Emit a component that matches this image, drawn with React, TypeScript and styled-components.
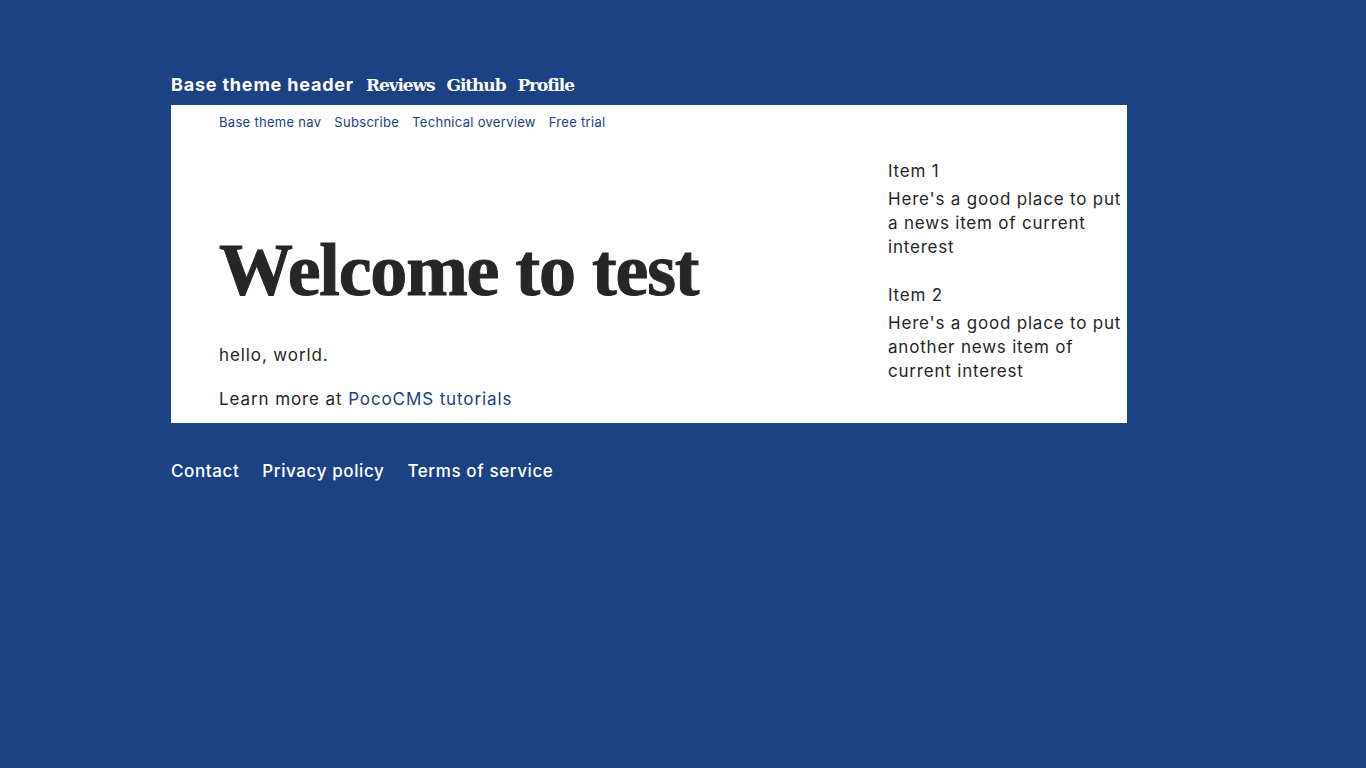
import React from 'react';
import styled, { createGlobalStyle } from 'styled-components';

// Base theme landing page

const GlobalStyle = createGlobalStyle`
  html, body {
    margin: 0;
    padding: 0;
    background: #1d4185;
  }
  body {
    font-family: Inter, "Open Sans", sans-serif;
    color: #262626;
  }
  * { box-sizing: border-box; }
`;

const Page = styled.div`
  width: 956px;
  margin: 0 auto 0 171px;
  padding-top: 74px;
  min-height: 768px;
`;

const Header = styled.header`
  display: flex;
  align-items: baseline;
  gap: 12px;
  height: 31px;
`;

const SiteName = styled.span`
  font-weight: 700;
  font-size: 18px;
  letter-spacing: 0.8px;
  color: #fff;
`;

const HeaderLink = styled.a`
  font-family: "DejaVu Serif", "Liberation Serif", serif;
  font-weight: 700;
  font-size: 17px;
  letter-spacing: -1.1px;
  color: #fff;
  text-decoration: none;
`;

const Main = styled.main`
  background: #fff;
  padding-bottom: 12px;
`;

const Nav = styled.nav`
  display: flex;
  gap: 13px;
  padding: 9px 48px 0;
  height: 36px;
`;

const NavLink = styled.a`
  font-size: 13px;
  letter-spacing: 0.3px;
  color: #1d4185;
  text-decoration: none;
`;

const Body = styled.div`
  display: flex;
`;

const Article = styled.article`
  flex: 1;
  padding: 92px 0 0 48px;
`;

const Headline = styled.h1`
  font-family: "Liberation Serif", "DejaVu Serif", serif;
  font-weight: 700;
  font-size: 74px;
  letter-spacing: -1.2px;
  line-height: 1;
  margin: 0 0 36px;
  color: #262626;
  -webkit-text-stroke: 1px #262626;
`;

const Para = styled.p`
  font-size: 17px;
  line-height: 24px;
  letter-spacing: 0.9px;
  margin: 0 0 20px;
  &:last-child { margin-bottom: 0; }
`;

const InlineLink = styled.a`
  color: #1d4185;
  text-decoration: none;
`;

const Aside = styled.aside`
  width: 239px;
  padding-top: 18px;
`;

const NewsItem = styled.div`
  margin-bottom: 24px;
`;

const NewsTitle = styled.div`
  font-size: 17px;
  line-height: 24px;
  letter-spacing: 0.8px;
  margin-bottom: 4px;
`;

const NewsText = styled.div`
  font-size: 17px;
  line-height: 24px;
  letter-spacing: 0.8px;
`;

const Footer = styled.footer`
  display: flex;
  gap: 23px;
  padding-top: 38px;
`;

const FooterLink = styled.a`
  font-size: 17px;
  font-weight: 500;
  letter-spacing: 0.6px;
  color: #fff;
  text-decoration: none;
`;

const news = [
  { title: 'Item 1', text: "Here's a good place to put a news item of current interest" },
  { title: 'Item 2', text: "Here's a good place to put another news item of current interest" },
];

export default function App(): React.JSX.Element {
  return (
    <>
      <GlobalStyle />
      <Page>
        <Header>
          <SiteName>Base theme header</SiteName>
          <HeaderLink href="#">Reviews</HeaderLink>
          <HeaderLink href="#">Github</HeaderLink>
          <HeaderLink href="#">Profile</HeaderLink>
        </Header>
        <Main>
          <Nav>
            <NavLink href="#">Base theme nav</NavLink>
            <NavLink href="#">Subscribe</NavLink>
            <NavLink href="#">Technical overview</NavLink>
            <NavLink href="#">Free trial</NavLink>
          </Nav>
          <Body>
            <Article>
              <Headline>Welcome to test</Headline>
              <Para>hello, world.</Para>
              <Para>
                Learn more at <InlineLink href="#">PocoCMS tutorials</InlineLink>
              </Para>
            </Article>
            <Aside>
              {news.map((n) => (
                <NewsItem key={n.title}>
                  <NewsTitle>{n.title}</NewsTitle>
                  <NewsText>{n.text}</NewsText>
                </NewsItem>
              ))}
            </Aside>
          </Body>
        </Main>
        <Footer>
          <FooterLink href="#">Contact</FooterLink>
          <FooterLink href="#">Privacy policy</FooterLink>
          <FooterLink href="#">Terms of service</FooterLink>
        </Footer>
      </Page>
    </>
  );
}
